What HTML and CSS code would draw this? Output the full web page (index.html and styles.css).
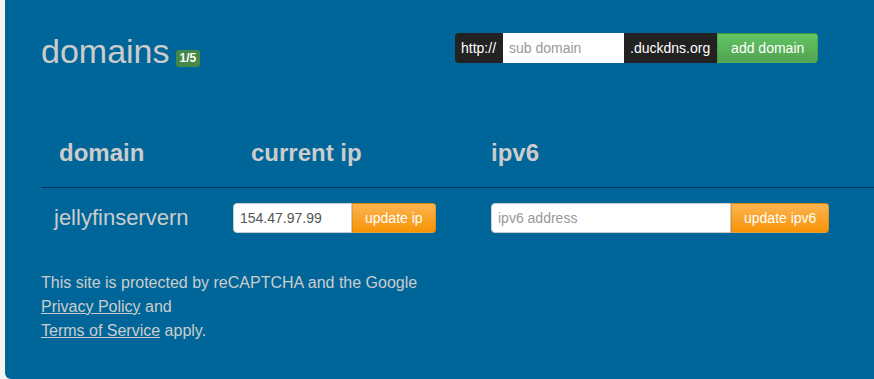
FILE: index.html
```
<!DOCTYPE html>
<html lang="en">
<head>
  <meta charset="UTF-8" />
  <title>Duck DNS - domains</title>
  <link rel="stylesheet" href="styles.css">
</head>
<body>
  <div class="panel">
    <div class="top">
      <h1>domains<span class="badge">1/5</span></h1>
      <form class="add-form">
        <span class="addon left">http://</span>
        <input class="sub" type="text" placeholder="sub domain" />
        <span class="addon">.duckdns.org</span>
        <button type="submit" class="btn btn-green">add domain</button>
      </form>
    </div>

    <table class="domains">
      <thead>
        <tr>
          <th class="c1">domain</th>
          <th class="c2">current ip</th>
          <th class="c3">ipv6</th>
        </tr>
      </thead>
      <tbody>
        <tr>
          <td class="name">jellyfinservern</td>
          <td class="ip">
            <div class="group">
              <input class="ip4" type="text" value="154.47.97.99" />
              <button class="btn btn-orange">update ip</button>
            </div>
          </td>
          <td class="ip6">
            <div class="group">
              <input class="ipv6" type="text" placeholder="ipv6 address" />
              <button class="btn btn-orange">update ipv6</button>
            </div>
          </td>
        </tr>
      </tbody>
    </table>

    <p class="legal">
      This site is protected by reCAPTCHA and the Google<br>
      <a href="#">Privacy Policy</a> and<br>
      <a href="#">Terms of Service</a> apply.
    </p>
  </div>
</body>
</html>
```

FILE: styles.css
```
body {
  margin: 0;
  padding: 0;
  font-family: "Liberation Sans", Arial, sans-serif;
  background: #f4f3ef;
  overflow: hidden;
}
.panel {
  margin-left: 5px;
  width: 900px;
  background: #006699;
  border-radius: 0 0 6px 6px;
  padding: 0 0 36px 36px;
  box-sizing: border-box;
  color: #cccccc;
}
.top {
  display: flex;
  align-items: flex-start;
  padding-top: 31px;
}
h1 {
  margin: 0;
  width: 414px;
  font-size: 34px;
  font-weight: normal;
  line-height: 40px;
  color: #cccccc;
}
.badge {
  display: inline-block;
  margin-left: 6px;
  padding: 2px 4px;
  font-size: 12px;
  font-weight: bold;
  line-height: 13px;
  color: #ffffff;
  background: #468847;
  border-radius: 3px;
  vertical-align: 1px;
}
.add-form {
  display: flex;
  margin: 2px 0 0 0;
  height: 30px;
}
.addon {
  display: flex;
  align-items: center;
  padding: 0 7px 0 6px;
  background: #222222;
  color: #ffffff;
  font-size: 14px;
}
.addon.left {
  border-radius: 4px 0 0 4px;
}
input {
  font-family: "Liberation Sans", Arial, sans-serif;
  font-size: 14px;
  color: #555555;
  border: 1px solid #cccccc;
  padding: 0 6px;
  height: 30px;
  box-sizing: border-box;
  outline: none;
}
input::placeholder {
  color: #999999;
}
.sub {
  width: 121px;
  border: none;
}
.btn {
  font-family: "Liberation Sans", Arial, sans-serif;
  font-size: 14px;
  color: #ffffff;
  height: 30px;
  padding: 0 12px;
  border: 1px solid rgba(0, 0, 0, 0.1);
  border-radius: 0 4px 4px 0;
  cursor: pointer;
}
.btn-green {
  width: 101px;
  background: linear-gradient(#62c462, #51a351);
}
.btn-orange {
  background: linear-gradient(#fbb450, #f89406);
}
.domains {
  width: 100%;
  margin-top: 47px;
  border-collapse: collapse;
}
th {
  text-align: left;
  font-size: 24px;
  line-height: 30px;
  color: #cccccc;
  padding: 20px 0 19px 18px;
  border-bottom: 1px solid #003366;
}
th.c1 {
  width: 174px;
}
th.c2 {
  width: 222px;
}
td {
  padding: 15px 0 14px 0;
  vertical-align: middle;
}
td.name {
  padding-left: 13px;
  font-size: 22px;
}
td.ip6 {
  padding-left: 18px;
}
.group {
  display: flex;
}
.group input {
  border-radius: 4px 0 0 4px;
}
.ip4 {
  width: 119px;
}
.ipv6 {
  width: 240px;
}
.legal {
  margin: 24px 0 0 0;
  font-size: 16px;
  line-height: 24px;
  color: #cccccc;
}
.legal a {
  color: #cccccc;
  text-decoration: underline;
}
```
